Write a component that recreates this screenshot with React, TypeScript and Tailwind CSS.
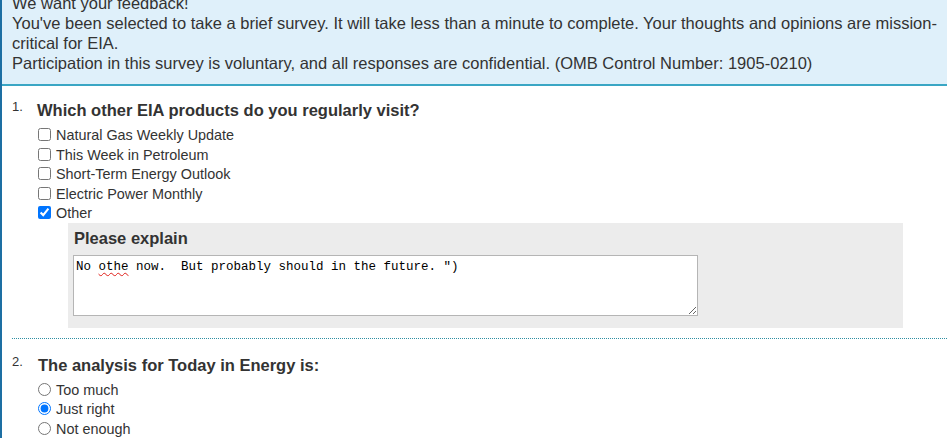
import { useState } from 'react';

const products = [
    'Natural Gas Weekly Update',
    'This Week in Petroleum',
    'Short-Term Energy Outlook',
    'Electric Power Monthly',
    'Other',
];

const amounts = ['Too much', 'Just right', 'Not enough'];

export default function App() {
    const [checked, setChecked] = useState<string[]>(['Other']);
    const [amount, setAmount] = useState('Just right');

    function toggle(name: string): void {
        setChecked((prev) => (prev.includes(name) ? prev.filter((p) => p !== name) : [...prev, name]));
    }

    return (
        <div className="min-h-[445px] border-l-2 border-[#1d6fa3] bg-white font-['Liberation_Sans',Arial,sans-serif] text-[#333]">
            <div className="-mt-[7px] border-b-2 border-[#3aa6c4] bg-[#dff0fa] pb-[11px] pl-[10px] pr-[2px] text-[16.5px] leading-5">
                <p>We want your feedback!</p>
                <p className="whitespace-nowrap">
                    You've been selected to take a brief survey. It will take less than a minute to complete. Your thoughts and opinions are mission-
                    <br />
                    critical for EIA.
                </p>
                <p>Participation in this survey is voluntary, and all responses are confidential. (OMB Control Number: 1905-0210)</p>
            </div>

            <div className="pl-[10px]">
                {/* question 1 */}
                <section className="pt-[14px] pb-[10px]">
                    <div className="flex items-start">
                        <span className="w-[25px] text-[13px] leading-[13px]">1.</span>
                        <h2 className="text-[16.5px] font-bold leading-5">Which other EIA products do you regularly visit?</h2>
                    </div>

                    <div className="ml-[26px] mt-[5px] text-[14.4px]">
                        {products.map((p) => (
                            <label key={p} className="flex h-[19.5px] items-center leading-4">
                                <input
                                    type="checkbox"
                                    className="m-0 mr-[5px] h-[13px] w-[13px]"
                                    checked={checked.includes(p)}
                                    onChange={() => toggle(p)}
                                />
                                <span className="pt-[1px]">{p}</span>
                            </label>
                        ))}
                    </div>

                    {checked.includes('Other') && (
                        <div className="ml-[56px] w-[835px] bg-[#ececec] pl-[5px] pt-[5px] pb-[12px]">
                            <div className="pl-[1px] text-[16.5px] font-bold leading-5">Please explain</div>
                            <div className="mt-[7px] h-[61px] w-[625px] resize overflow-auto whitespace-pre border border-[#b5b5b5] bg-white px-[2px] pt-[4px] font-['Liberation_Mono',monospace] text-[12.5px] leading-[14px] text-black">
                                No{' '}
                                <span className="underline decoration-[#e0201a] decoration-wavy decoration-1 underline-offset-2">othe</span>
                                {' now.  But probably should in the future. ")'}
                            </div>
                        </div>
                    )}
                </section>

                <div className="border-t border-dotted border-[#2f8fa3]" />

                {/* question 2 */}
                <section className="pt-[16px]">
                    <div className="flex items-start">
                        <span className="w-[26px] text-[13px] leading-[13px]">2.</span>
                        <h2 className="text-[16.5px] font-bold leading-5">The analysis for Today in Energy is:</h2>
                    </div>

                    <div className="ml-[26px] mt-[5px] text-[14.4px]">
                        {amounts.map((a) => (
                            <label key={a} className="flex h-[19.5px] items-center leading-4">
                                <input
                                    type="radio"
                                    name="amount"
                                    className="m-0 mr-[5px] h-[13px] w-[13px]"
                                    checked={amount === a}
                                    onChange={() => setAmount(a)}
                                />
                                <span className="pt-[1px]">{a}</span>
                            </label>
                        ))}
                    </div>
                </section>
            </div>
        </div>
    );
}
